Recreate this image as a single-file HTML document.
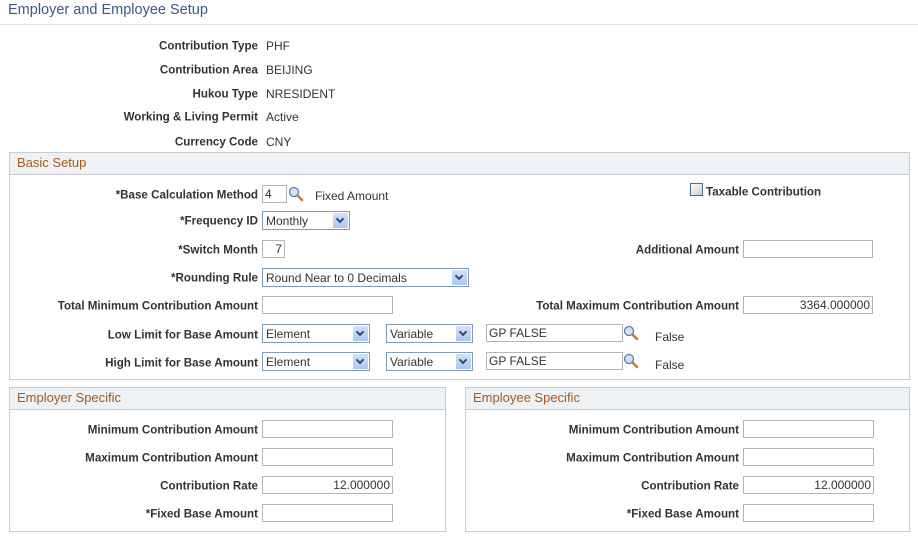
<!DOCTYPE html>
<html><head><style>
body{margin:0;width:918px;height:537px;background:#fff;font-family:"Liberation Sans",Arial,sans-serif;font-size:12px;color:#333;position:relative;overflow:hidden}
.t{position:absolute;left:8px;top:2px;font-size:14.5px;color:#3d5a80}
.hr{position:absolute;left:0;top:24px;width:918px;height:1px;background:#dde1e4}
.lb{position:absolute;font-weight:bold;font-size:11.6px;text-align:right;white-space:nowrap;color:#333;transform:translateY(calc(-50% + 1px))}
.v{position:absolute;white-space:nowrap;transform:translateY(calc(-50% + 1px));color:#333}
.box{position:absolute;border:1px solid #c6ccd1;box-sizing:border-box}
.hd{height:21px;background:#eef2f4;border-bottom:1px solid #c6ccd1;color:#a8561c;font-size:13px;line-height:20px;padding-left:7px}
.in{position:absolute;height:18px;border:1px solid #b5b5b5;box-sizing:border-box;background:#fff;font-size:12px;line-height:17px;padding:0 2px;white-space:nowrap}
.r{text-align:right}
.sel{position:absolute;height:19px;border:1px solid #7f9db9;box-sizing:border-box;background:#fff;font-size:12px;line-height:18px;padding-left:3px;white-space:nowrap}
.sel i{position:absolute;right:1px;top:1px;width:15px;height:15px;background:linear-gradient(#d3e1f8,#aec6ee)}
.sel i:after{content:"";position:absolute;left:4px;top:3px;width:4px;height:4px;border-right:2px solid #2b4a7a;border-bottom:2px solid #2b4a7a;transform:rotate(45deg)}
.mg{position:absolute;width:16px;height:16px}
</style></head><body>
<div class="t">Employer and Employee Setup</div>
<div class="hr"></div>

<div class="lb" style="right:660px;top:45px">Contribution Type</div><div class="v" style="left:266px;top:45px">PHF</div>
<div class="lb" style="right:660px;top:69px">Contribution Area</div><div class="v" style="left:266px;top:69px">BEIJING</div>
<div class="lb" style="right:660px;top:93px">Hukou Type</div><div class="v" style="left:266px;top:93px">NRESIDENT</div>
<div class="lb" style="right:660px;top:116px">Working &amp; Living Permit</div><div class="v" style="left:266px;top:116px">Active</div>
<div class="lb" style="right:660px;top:141px">Currency Code</div><div class="v" style="left:266px;top:141px">CNY</div>

<div class="box" style="left:9px;top:152px;width:901px;height:228px"><div class="hd">Basic Setup</div></div>

<div class="lb" style="right:660px;top:194px">*Base Calculation Method</div>
<div class="in" style="left:262px;top:185px;width:25px">4</div>
<svg class="mg" style="left:288px;top:186px" viewBox="0 0 16 16"><circle cx="6" cy="6" r="4.5" fill="#cfe3f7" stroke="#5a7fa8" stroke-width="1.3"/><path d="M9.5 9.5L14 14" stroke="#c77b2c" stroke-width="2.5" stroke-linecap="round"/></svg>
<div class="v" style="left:315px;top:195px">Fixed Amount</div>

<div style="position:absolute;left:690px;top:183px;width:11px;height:11px;border:1px solid #4a6a8f;background:linear-gradient(135deg,#fff,#ccc)"></div>
<div class="lb" style="left:706px;top:191px;text-align:left">Taxable Contribution</div>

<div class="lb" style="right:660px;top:220px">*Frequency ID</div>
<div class="sel" style="left:262px;top:211px;width:88px">Monthly<i></i></div>

<div class="lb" style="right:660px;top:249px">*Switch Month</div>
<div class="in r" style="left:262px;top:240px;width:23px">7</div>
<div class="lb" style="right:179px;top:249px">Additional Amount</div>
<div class="in" style="left:743px;top:240px;width:130px"></div>

<div class="lb" style="right:660px;top:277px">*Rounding Rule</div>
<div class="sel" style="left:262px;top:268px;width:207px">Round Near to 0 Decimals<i></i></div>

<div class="lb" style="right:660px;top:305px">Total Minimum Contribution Amount</div>
<div class="in" style="left:262px;top:296px;width:131px"></div>
<div class="lb" style="right:179px;top:305px">Total Maximum Contribution Amount</div>
<div class="in r" style="left:743px;top:296px;width:130px">3364.000000</div>

<div class="lb" style="right:660px;top:334px">Low Limit for Base Amount</div>
<div class="sel" style="left:262px;top:324px;width:108px">Element<i></i></div>
<div class="sel" style="left:386px;top:324px;width:87px">Variable<i></i></div>
<div class="in" style="left:486px;top:324px;width:137px">GP FALSE</div>
<svg class="mg" style="left:623px;top:325px" viewBox="0 0 16 16"><circle cx="6" cy="6" r="4.5" fill="#cfe3f7" stroke="#5a7fa8" stroke-width="1.3"/><path d="M9.5 9.5L14 14" stroke="#c77b2c" stroke-width="2.5" stroke-linecap="round"/></svg>
<div class="v" style="left:655px;top:336px">False</div>

<div class="lb" style="right:660px;top:362px">High Limit for Base Amount</div>
<div class="sel" style="left:262px;top:352px;width:108px">Element<i></i></div>
<div class="sel" style="left:386px;top:352px;width:87px">Variable<i></i></div>
<div class="in" style="left:486px;top:352px;width:137px">GP FALSE</div>
<svg class="mg" style="left:623px;top:353px" viewBox="0 0 16 16"><circle cx="6" cy="6" r="4.5" fill="#cfe3f7" stroke="#5a7fa8" stroke-width="1.3"/><path d="M9.5 9.5L14 14" stroke="#c77b2c" stroke-width="2.5" stroke-linecap="round"/></svg>
<div class="v" style="left:655px;top:364px">False</div>

<div class="box" style="left:9px;top:387px;width:437px;height:145px"><div class="hd">Employer Specific</div></div>
<div class="box" style="left:465px;top:387px;width:445px;height:145px"><div class="hd">Employee Specific</div></div>

<div class="lb" style="right:660px;top:429px">Minimum Contribution Amount</div>
<div class="in" style="left:262px;top:420px;width:131px"></div>
<div class="lb" style="right:660px;top:457px">Maximum Contribution Amount</div>
<div class="in" style="left:262px;top:448px;width:131px"></div>
<div class="lb" style="right:660px;top:485px">Contribution Rate</div>
<div class="in r" style="left:262px;top:476px;width:131px">12.000000</div>
<div class="lb" style="right:660px;top:513px">*Fixed Base Amount</div>
<div class="in" style="left:262px;top:504px;width:131px"></div>

<div class="lb" style="right:179px;top:429px">Minimum Contribution Amount</div>
<div class="in" style="left:743px;top:420px;width:131px"></div>
<div class="lb" style="right:179px;top:457px">Maximum Contribution Amount</div>
<div class="in" style="left:743px;top:448px;width:131px"></div>
<div class="lb" style="right:179px;top:485px">Contribution Rate</div>
<div class="in r" style="left:743px;top:476px;width:131px">12.000000</div>
<div class="lb" style="right:179px;top:513px">*Fixed Base Amount</div>
<div class="in" style="left:743px;top:504px;width:131px"></div>
</body></html>
